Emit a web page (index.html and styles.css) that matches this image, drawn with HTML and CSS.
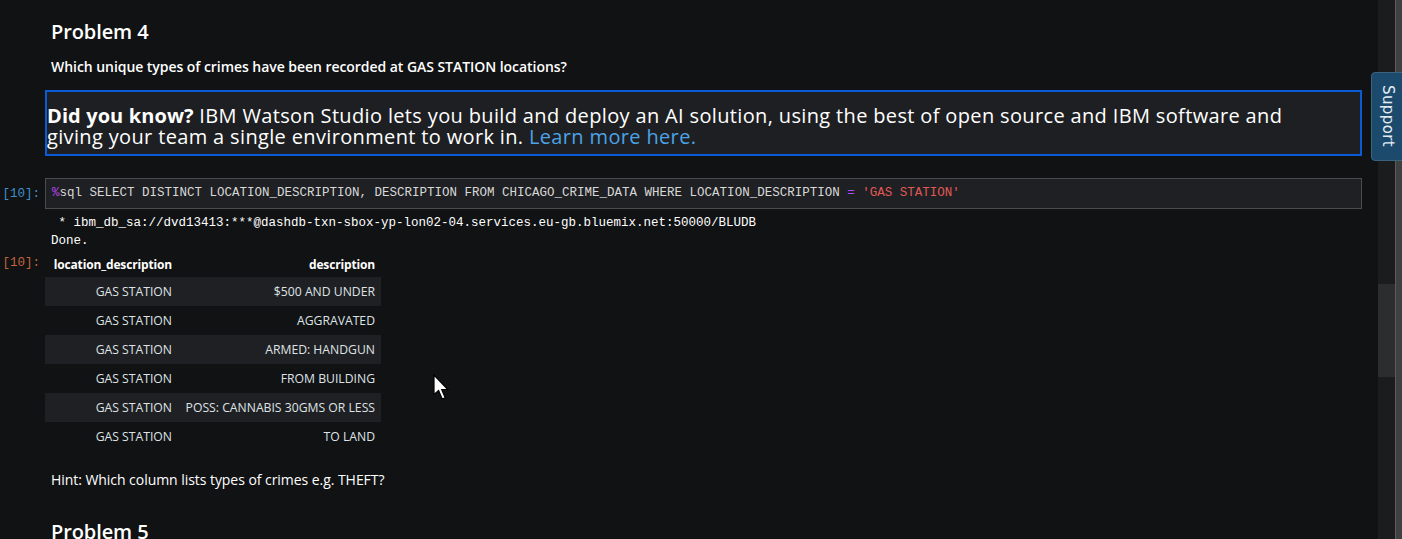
FILE: index.html
```html
<!DOCTYPE html>
<html lang="en">
<head>
<meta charset="utf-8">
<title>Notebook</title>
<link rel="stylesheet" href="styles.css">
</head>
<body>
<div class="window">
  <main class="notebook">
    <section class="cell">
      <div class="prompt"></div>
      <div class="md">
        <h3 class="heading">Problem 4</h3>
        <p class="question">Which unique types of crimes have been recorded at GAS STATION locations?</p>
      </div>
    </section>

    <section class="cell">
      <div class="prompt"></div>
      <div class="alert">
        <b>Did you know?</b> IBM Watson Studio lets you build and deploy an AI solution, using the best of open source and IBM software and giving your team a single environment to work in. <a class="link" href="#">Learn more here.</a>
      </div>
    </section>

    <section class="cell code-cell">
      <div class="prompt in">[10]:</div>
      <div class="input"><span class="magic">%</span>sql SELECT DISTINCT LOCATION_DESCRIPTION, DESCRIPTION FROM CHICAGO_CRIME_DATA WHERE LOCATION_DESCRIPTION <span class="op">=</span> <span class="str">'GAS STATION'</span></div>
    </section>

    <section class="cell out-text">
      <div class="prompt"></div>
      <pre class="stream"> * ibm_db_sa://dvd13413:***@dashdb-txn-sbox-yp-lon02-04.services.eu-gb.bluemix.net:50000/BLUDB
Done.</pre>
    </section>

    <section class="cell out-table">
      <div class="prompt out">[10]:</div>
      <table class="df">
        <colgroup><col class="c1"><col class="c2"></colgroup>
        <thead>
          <tr><th>location_description</th><th>description</th></tr>
        </thead>
        <tbody>
          <tr><td>GAS STATION</td><td>$500 AND UNDER</td></tr>
          <tr><td>GAS STATION</td><td>AGGRAVATED</td></tr>
          <tr><td>GAS STATION</td><td>ARMED: HANDGUN</td></tr>
          <tr><td>GAS STATION</td><td>FROM BUILDING</td></tr>
          <tr><td>GAS STATION</td><td>POSS: CANNABIS 30GMS OR LESS</td></tr>
          <tr><td>GAS STATION</td><td>TO LAND</td></tr>
        </tbody>
      </table>
    </section>

    <section class="cell">
      <div class="prompt"></div>
      <div class="md">
        <p class="hint">Hint: Which column lists types of crimes e.g. THEFT?</p>
        <h3 class="heading next">Problem 5</h3>
      </div>
    </section>
  </main>

  <div class="scroll-track">
    <div class="scroll-thumb"></div>
  </div>
  <div class="outer-strip"></div>
</div>

<div class="support-tab">Support</div>

<svg class="cursor" width="17" height="27" viewBox="0 0 17 27" aria-hidden="true">
  <path d="M1 1 L1 20.5 L5.6 16.4 L9.2 25 L12.2 23.8 L8.7 15.5 L14.8 15.5 Z" fill="#ffffff" stroke="#000000" stroke-width="1.2" stroke-linejoin="miter"/>
</svg>
</body>
</html>
```

FILE: styles.css
```css
html, body {
  margin: 0;
  padding: 0;
  height: 100%;
  overflow: hidden;
  background: #111214;
}

body {
  font-family: "Open Sans", "Noto Sans", sans-serif;
  color: #ffffff;
}

.window {
  display: flex;
  height: 539px;
}

.notebook {
  width: 1378px;
  flex: none;
  padding-top: 20px;
  box-sizing: border-box;
}

.cell {
  display: flex;
  align-items: flex-start;
  padding-right: 16px;
}

.prompt {
  width: 45px;
  flex: none;
  font-family: "Liberation Mono", "DejaVu Sans Mono", monospace;
  font-size: 12.5px;
  text-align: right;
  box-sizing: border-box;
  padding-right: 5px;
}

.prompt.in { color: #3f8fcb; line-height: 17px; padding-top: 8px; }
.prompt.out { color: #c1643d; line-height: 18px; padding-top: 0; }

.md {
  flex: 1;
  padding-left: 6px;
}

.heading {
  margin: 0;
  font-size: 20px;
  line-height: 24px;
  font-weight: 600;
  letter-spacing: -0.1px;
}

.heading.next { margin-top: 30px; }

.question {
  margin: 13px 0 0;
  font-size: 14px;
  line-height: 20px;
  font-weight: 600;
  letter-spacing: -0.05px;
}

.alert {
  flex: 1;
  margin-top: 13px;
  border: 2px solid #0b5ad6;
  background: #1e1f22;
  padding: 13px 50px 7px 0;
  font-size: 20px;
  line-height: 21px;
  letter-spacing: 0.35px;
  color: #ffffff;
}

.alert b { font-weight: 700; letter-spacing: 0.1px; }

.link {
  color: #4ba3e6;
  text-decoration: none;
}

.code-cell { margin-top: 22px; }

.input {
  flex: 1;
  background: #1f2023;
  border: 1px solid #4a4b4d;
  padding: 6px 6px;
  font-family: "Liberation Mono", "DejaVu Sans Mono", monospace;
  font-size: 12.5px;
  line-height: 17px;
  color: #d8d8d8;
  white-space: pre;
}

.magic { color: #b845f5; }
.op { color: #b048ff; }
.str { color: #e05a55; }

.out-text { padding-top: 5px; }

.stream {
  margin: 0;
  padding-left: 6px;
  font-family: "Liberation Mono", "DejaVu Sans Mono", monospace;
  font-size: 12.5px;
  line-height: 18px;
  color: #ffffff;
}

.out-table { padding-top: 4px; }

.df {
  border-collapse: collapse;
  table-layout: fixed;
  width: 336px;
  font-size: 12.2px;
  color: #dfe3e6;
}

.df .c1 { width: 133px; }
.df .c2 { width: 203px; }

.df th {
  color: #ffffff;
  font-weight: 700;
  font-size: 12px;
  letter-spacing: -0.15px;
  text-align: right;
  height: 21px;
  padding: 0 6px 2px;
  vertical-align: middle;
  white-space: nowrap;
}

.df td {
  text-align: right;
  height: 29px;
  padding: 0 6px;
  vertical-align: middle;
  white-space: nowrap;
}

.df tbody tr:nth-child(odd) { background: #1f2023; }

.hint {
  margin: 19px 0 0;
  font-size: 14px;
  line-height: 20px;
  letter-spacing: -0.05px;
}

.scroll-track {
  width: 17px;
  flex: none;
  background: #1b1c1e;
  padding-top: 284px;
  box-sizing: border-box;
}

.scroll-thumb {
  height: 93px;
  background: #2c2d2f;
}

.outer-strip {
  width: 7px;
  flex: none;
  background: #3e4042;
  border-left: 1px solid #5a5b5d;
  box-sizing: border-box;
}

.support-tab {
  position: absolute;
  left: 1371px;
  top: 72px;
  width: 34px;
  height: 89px;
  box-sizing: border-box;
  background: #1c4a6c;
  border: 1px solid #3b627f;
  border-radius: 4px 0 0 4px;
  writing-mode: vertical-rl;
  font-family: "DejaVu Sans", sans-serif;
  font-size: 15px;
  line-height: 32px;
  letter-spacing: 0.4px;
  color: #e4ecf2;
  padding-top: 12px;
}

.cursor {
  position: absolute;
  left: 433px;
  top: 374px;
}
```
